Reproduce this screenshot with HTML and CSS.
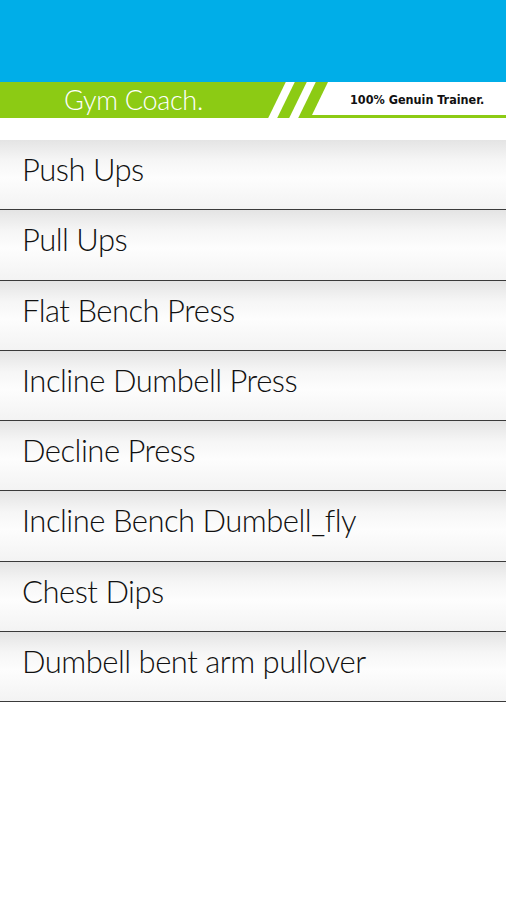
FILE: index.html
```html
<!DOCTYPE html>
<html lang="en">

<head>
    <meta charset="UTF-8">
    <meta name="viewport" content="width=device-width, initial-scale=1.0">
    <title>Gym Coach</title>
    <link rel="stylesheet" href="styles.css">
</head>

<body>
    <header class="top-bar"></header>

    <div class="banner">
        <div class="brand">Gym Coach.</div>
        <div class="stripes">
            <span class="stripe"></span>
            <span class="stripe"></span>
        </div>
        <div class="tagline">100% Genuin Trainer.</div>
    </div>

    <ul class="exercise-list">
        <li class="exercise">Push Ups</li>
        <li class="exercise">Pull Ups</li>
        <li class="exercise">Flat Bench Press</li>
        <li class="exercise">Incline Dumbell Press</li>
        <li class="exercise">Decline Press</li>
        <li class="exercise">Incline Bench Dumbell_fly</li>
        <li class="exercise">Chest Dips</li>
        <li class="exercise">Dumbell bent arm pullover</li>
    </ul>
</body>

</html>
```

FILE: styles.css
```css
body {
    margin: 0;
    background: #fff;
    font-family: Lato, "Open Sans", sans-serif;
}

.top-bar {
    height: 82px;
    background-color: #00aee8;
}

/* green title strip with the white slanted tag on the right */
.banner {
    display: flex;
    height: 36px;
    background-color: #8ccb14;
    overflow: hidden;
}

.brand {
    flex: none;
    width: 268px;
    padding-left: 64px;
    box-sizing: border-box;
    color: #fff;
    font-weight: 300;
    font-size: 27px;
    line-height: 36px;
    letter-spacing: -0.3px;
    white-space: nowrap;
}

.stripes {
    flex: none;
    display: flex;
    gap: 12px;
    padding-left: 9px;
    width: 43px;
    box-sizing: border-box;
}

.stripe {
    width: 9px;
    background: #fff;
    transform: skewX(-26deg);
}

.tagline {
    flex: 1;
    height: 33px;
    margin-left: 1px;
    padding-left: 38px;
    background: #fff;
    clip-path: polygon(16px 0, 100% 0, 100% 100%, 0 100%);
    color: #111;
    font-family: "DejaVu Sans Condensed", sans-serif;
    font-weight: bold;
    font-size: 12.5px;
    line-height: 35px;
    white-space: nowrap;
}

.exercise-list {
    list-style: none;
    margin: 22px 0 0;
    padding: 0;
}

.exercise {
    height: 70.25px;
    box-sizing: border-box;
    padding-left: 22px;
    border-bottom: 1px solid #3a3a3a;
    background: linear-gradient(#e4e4e4, #f6f6f6 30%, #fdfdfd 55%, #f3f3f3);
    color: #111;
    font-weight: 300;
    font-size: 31px;
    letter-spacing: -0.5px;
    line-height: 58px;
}
```
